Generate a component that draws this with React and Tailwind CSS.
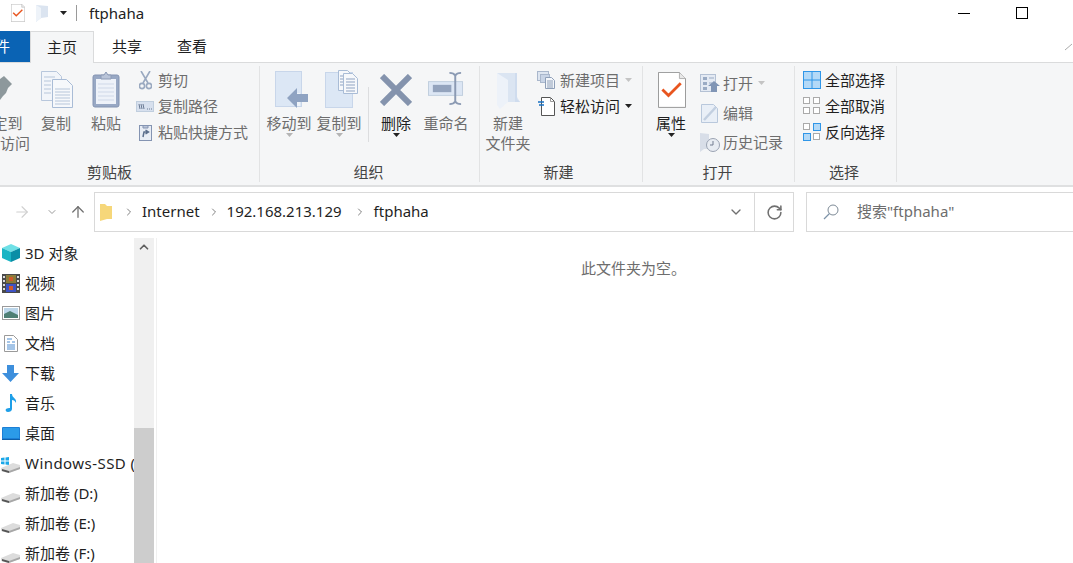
import { ArrowRight, ArrowUp, ChevronDown, ChevronRight, ChevronUp, RotateCw } from "lucide-react";

const Caret = ({ className = "" }) => (
    <svg width="7" height="4" viewBox="0 0 7 4" className={className}><path d="M0 0h7L3.5 4z" fill="currentColor" /></svg>
);

// ribbon icons
const PropsIcon = ({ size = 28 }) => (
    <svg width={size} height={size * 1.28} viewBox="0 0 32 41">
        <path d="M.5.5h24l7 7v33H.5z" fill="#fff" stroke="#8a8a8a" />
        <path d="M24.5.5v7h7" fill="#e8e8e8" stroke="#a8a8a8" />
        <path d="M5 20l7 7 14-14" fill="none" stroke="#e8551f" strokeWidth="3.2" />
    </svg>
);
const PinIcon = () => (
    <svg width="13" height="24" viewBox="0 0 13 24"><path d="M0 3l4-3 8 8-4 4-2 5-3 3-3 4z" fill="#8d989c" /></svg>
);
const CopyIcon = () => (
    <svg width="32" height="37" viewBox="0 0 32 37">
        <path d="M.5.5h15l5 5v24H.5z" fill="#f2f5fa" stroke="#b8c7dc" />
        <path d="M11.5 8.500h14l6 6v22h-20z" fill="#f6f8fb" stroke="#a9bcd6" />
        <path d="M3 6h11M3 10h7M3 14h7M3 18h7M3 22h7M14 18h15M14 21h15M14 24h15M14 27h15M14 30h15M14 33h15" stroke="#b7c6da" />
    </svg>
);
const PasteIcon = () => (
    <svg width="28" height="38" viewBox="0 0 28 38">
        <rect x="1" y="5" width="26" height="32" rx="2" fill="#98a8c4" stroke="#8494b2" />
        <rect x="4" y="9" width="20" height="25" fill="#eef2f9" />
        <path d="M6 14h16M6 18h16M6 22h16M6 26h16M6 30h16" stroke="#cfd8e8" />
        <path d="M9 9V5h3l2-3 2 3h3v4z" fill="#b9c4d8" stroke="#8c9ab5" />
    </svg>
);
const CutIcon = () => (
    <svg width="13" height="19" viewBox="0 0 13 19" fill="none" stroke="#9aa9c0" strokeWidth="1.6">
        <path d="M2 0l7 12M11 0L4 12" />
        <circle cx="3" cy="15" r="2.600" />
        <circle cx="10" cy="15" r="2.600" />
    </svg>
);
const CopyPathIcon = () => (
    <svg width="18" height="11" viewBox="0 0 18 11">
        <rect x=".5" y=".5" width="17" height="10" fill="#d7e0ee" stroke="#c0cede" />
        <path d="M3 3l1 5M5 3l1 5M7 3l1 5" stroke="#6a7a94" />
        <path d="M11 8h1M13 8h1M15 8h1" stroke="#6a7a94" />
    </svg>
);
const ShortcutIcon = () => (
    <svg width="13" height="18" viewBox="0 0 13 18">
        <rect x=".5" y="2.500" width="12" height="15" fill="#e8edf5" stroke="#8494b2" />
        <path d="M4 2.500h5V5H4z" fill="#b9c4d8" stroke="#8494b2" />
        <path d="M4 14l1-5h4M6.500 7l3 2-3 2" fill="none" stroke="#5a6e8c" strokeWidth="1.500" />
    </svg>
);
const MoveIcon = () => (
    <svg width="33" height="38" viewBox="0 0 33 38">
        <rect x=".5" y=".5" width="26" height="35" fill="#dce7f5" stroke="#c8d6ea" />
        <path d="M22 22h3v13h-3z" fill="#eef3f9" />
        <path d="M12 27l10-10v6h11v8H22v6z" fill="#8fa3c2" />
    </svg>
);
const CopyToIcon = () => (
    <svg width="33" height="38" viewBox="0 0 33 38">
        <rect x=".5" y="2.500" width="27" height="35" fill="#dce7f5" stroke="#c8d6ea" />
        <path d="M13.500 .5h9l4 4v16h-13z" fill="#f6f8fb" stroke="#a9bcd6" />
        <path d="M18.500 3.500h9l5 5v15h-14z" fill="#f6f8fb" stroke="#a9bcd6" />
        <path d="M21 9h9M21 12h9M21 15h9M21 18h9M21 21h9M15 6h3M15 9h3M15 12h3M15 15h3" stroke="#8fa3c2" />
    </svg>
);
const DeleteIcon = () => (
    <svg width="32" height="32" viewBox="0 0 32 32"><path d="M2 2l28 28M30 2L2 30" stroke="#8493ad" strokeWidth="6" /></svg>
);
const RenameIcon = () => (
    <svg width="36" height="33" viewBox="0 0 37 36" preserveAspectRatio="none">
        <rect x=".5" y="10.500" width="35" height="15" fill="#dce6f4" stroke="#c0cede" />
        <rect x="5" y="14" width="19" height="8" fill="#93a3bd" />
        <path d="M22 1c3 0 5 1 6 3 1-2 3-3 6-3M28 4v28M22 35c3 0 5-1 6-3 1 2 3 3 6 3" fill="none" stroke="#8b9ab3" strokeWidth="2" />
    </svg>
);
const FolderIcon = () => (
    <svg width="24" height="37" viewBox="0 0 24 37">
        <path d="M1 1h20v24l3 5H9z" fill="#dbe5f2" />
        <path d="M1 1l11 7v22L4 37 1 33z" fill="#edf2f9" />
        <path d="M21 1v26l3 3h-5V1z" fill="#cfdcee" />
    </svg>
);
const NewItemIcon = () => (
    <svg width="18" height="18" viewBox="0 0 18 18">
        <rect x=".5" y=".5" width="11" height="9" fill="#dde5f0" stroke="#a9b7cc" />
        <rect x="3.500" y="3.500" width="9" height="8" fill="#c8d4e6" stroke="#a9b7cc" />
        <path d="M8.500 6.500h6l3 3v8h-9z" fill="#f3f6fa" stroke="#8e9fb8" />
        <path d="M10 10h6M10 12h6M10 14h6M10 16h6" stroke="#8e9fb8" />
    </svg>
);
const EasyIcon = () => (
    <svg width="17" height="19" viewBox="0 0 17 19">
        <path d="M3.500 .5h9l4 4v14h-13z" fill="#fff" stroke="#555" />
        <path d="M12.500 .5v4h4" fill="none" stroke="#999" />
        <path d="M0 5h6M1 8h5" stroke="#1872c4" strokeWidth="1.300" />
    </svg>
);
const OpenIcon = () => (
    <svg width="20" height="18" viewBox="0 0 20 18">
        <rect x=".5" y=".5" width="15" height="17" fill="#e4eaf3" stroke="#b4c1d4" />
        <path d="M3 3h4v3H3zM3 8h4v3H3zM3 13h4v3H3z" fill="#9aabc4" />
        <path d="M9 4h5M9 9h3" stroke="#9aabc4" />
        <path d="M14 7l6 5h-3v6h-6v-6H8z" fill="#8095b5" />
    </svg>
);
const EditIcon = () => (
    <svg width="18" height="19" viewBox="0 0 18 19">
        <path d="M.5 .5h12l4 4v14H.5z" fill="#e9eff7" stroke="#b9c8dc" />
        <path d="M3 16L15 3" stroke="#c2cfe0" strokeWidth="2.500" />
    </svg>
);
const HistoryIcon = () => (
    <svg width="20" height="19" viewBox="0 0 20 19">
        <path d="M0 0l9 1v15H4l-4 3z" fill="#d8dee8" />
        <circle cx="13" cy="12" r="6.500" fill="#e8ecf2" stroke="#9aa3b2" />
        <path d="M13 8v4h-3" fill="none" stroke="#727d90" />
    </svg>
);
const GridIcon = ({ on }) => (
    <svg width="18" height="18" viewBox="0 0 18 18">
        {[[0, 0], [10, 0], [0, 10], [10, 10]].map(([x, y], i) => (
            on[i]
                ? <rect key={i} x={x + 0.5} y={y + 0.5} width="7" height="7" fill="#b3d9f7" stroke="#2f96e8" />
                : <rect key={i} x={x + 0.5} y={y + 0.5} width="6" height="6" fill="#fff" stroke="#aaa" />
        ))}
    </svg>
);
const SelectAllIcon = () => (
    <svg width="18" height="18" viewBox="0 0 18 18">
        <rect x=".5" y=".5" width="17" height="17" fill="#b3d9f7" stroke="#2f96e8" />
        <path d="M9 0v18M0 9h18" stroke="#2f96e8" />
    </svg>
);

// sidebar icons
const CubeIcon = () => (
    <svg width="18" height="18" viewBox="0 0 18 18">
        <path d="M9 0l9 4-9 4-9-4z" fill="#6fe0e6" />
        <path d="M0 4l9 4v10l-9-4z" fill="#19b4c4" />
        <path d="M18 4l-9 4v10l9-4z" fill="#0a8ea6" />
    </svg>
);
const FilmIcon = () => (
    <svg width="18" height="19" viewBox="0 0 18 19">
        <rect width="18" height="19" fill="#4a4a4a" />
        <path d="M1 2h2v2H1zM1 6h2v2H1zM1 10h2v2H1zM1 14h2v2H1zM15 2h2v2h-2zM15 6h2v2h-2zM15 10h2v2h-2zM15 14h2v2h-2z" fill="#ddd" />
        <rect x="4" y="1" width="10" height="8" fill="#8a7b3a" />
        <rect x="4" y="10" width="10" height="8" fill="#3f53c4" />
        <path d="M7 3h4v4H7zM7 12h4v4H7z" fill="#d05a2a" />
    </svg>
);
const PictureIcon = () => (
    <svg width="18" height="14" viewBox="0 0 18 14">
        <rect x=".5" y=".5" width="17" height="13" fill="#fff" stroke="#9a9a9a" />
        <rect x="2" y="2" width="14" height="10" fill="#bcd6ea" />
        <path d="M2 8l6-3 8 4v3H2z" fill="#4e7f74" />
    </svg>
);
const DocIcon = () => (
    <svg width="14" height="17" viewBox="0 0 14 17">
        <path d="M.5 .5h9l4 4v12H.5z" fill="#fff" stroke="#9a9a9a" />
        <path d="M3 4h5M3 7h3M8 7h3M3 10h8M3 12h8M3 14h8" stroke="#4a8bd0" />
    </svg>
);
const DownloadIcon = () => (
    <svg width="17" height="17" viewBox="0 0 17 17"><path d="M5 0h7v8h5l-8.500 9L0 8h5z" fill="#3d8fdc" /></svg>
);
const NoteIcon = () => (
    <svg width="12" height="18" viewBox="0 0 12 18">
        <path d="M5 0h2c0 4 5 4 4 9-1-2-2-3-4-3v9c0 2-2 3-4 3S0 16 1 15s3-1 4-1z" fill="#1e9fe8" />
    </svg>
);
const DesktopIcon = () => (
    <svg width="18" height="13" viewBox="0 0 18 13">
        <rect width="18" height="13" rx="1" fill="#1c7fd6" />
        <path d="M1 1h16v10H1z" fill="#2b9be8" />
        <path d="M0 12h18v1H0z" fill="#0f5fa8" />
    </svg>
);
const DriveIcon = () => (
    <svg width="19" height="10" viewBox="0 0 19 10" className="mt-[10px]">
        <path d="M0 5l12-5 7 2v4L7 10 0 8z" fill="#dcdcdc" />
        <path d="M1 6l7 2v2L1 8z" fill="#555" />
        <path d="M8 8l11-4v2L8 10z" fill="#a8a8a8" />
    </svg>
);
const WinDriveIcon = () => (
    <svg width="19" height="16" viewBox="0 0 19 16" className="mt-[3px]">
        <path d="M0 1l3.500-.5V3.500H0zM4.500 .4L8 0v3.500H4.500zM0 4.500h3.500v3L0 7zM4.500 4.500H8V8l-3.500-.5z" fill="#1aa7e8" />
        <path d="M0 11l12-5 7 2v4l-12 4-7-2z" fill="#dcdcdc" />
        <path d="M1 12l7 2v2l-7-2z" fill="#555" />
        <path d="M8 14l11-4v2L8 16z" fill="#a8a8a8" />
    </svg>
);

const BigButton = ({ width, icon, children, caret, dim = true, iconClass = "" }) => (
    <div className={`${width} shrink-0 flex flex-col items-center`}>
        <div className={`h-[43px] flex items-end justify-center ${iconClass}`}>{icon}</div>
        <div className={`mt-[1px] text-center leading-[20px] whitespace-nowrap ${dim ? "text-[#6d6d6d]" : "text-[#1f1f1f]"}`}>{children}</div>
        {caret && <Caret className={dim ? "text-[#b5b5b5]" : "text-[#222]"} />}
    </div>
);

const SmallButton = ({ icon, label, iconWidth, gap, height, dim = true, caret, caretDim = true }) => (
    <div className={`${height} flex items-center`}>
        <div className={`${iconWidth} ${gap} flex justify-center shrink-0`}>{icon}</div>
        <span className={`whitespace-nowrap ${dim ? "text-[#6d6d6d]" : "text-[#1f1f1f]"}`}>{label}</span>
        {caret && <Caret className={`ml-[5px] ${caretDim ? "text-[#c4c4c4]" : "text-[#222]"}`} />}
    </div>
);

const Group = ({ width, label, children }) => (
    <div className={`${width} shrink-0 my-[3px] border-r border-[#e2e3e4] flex flex-col`}>
        <div className="h-[97px] flex overflow-hidden">{children}</div>
        <div className="h-[20px] text-center leading-[20px] text-[#444]">{label}</div>
    </div>
);

const navItems = [
    { icon: <CubeIcon />, label: "3D 对象" },
    { icon: <FilmIcon />, label: "视频" },
    { icon: <PictureIcon />, label: "图片" },
    { icon: <DocIcon />, label: "文档" },
    { icon: <DownloadIcon />, label: "下载" },
    { icon: <NoteIcon />, label: "音乐" },
    { icon: <DesktopIcon />, label: "桌面" },
    { icon: <WinDriveIcon />, label: "Windows-SSD (C:)", labelClass: "tracking-[0.45px]" },
    { icon: <DriveIcon />, label: "新加卷 (D:)" },
    { icon: <DriveIcon />, label: "新加卷 (E:)" },
    { icon: <DriveIcon />, label: "新加卷 (F:)" },
];

export default function App() {
    return (
        <div className="w-[1073px] h-[563px] overflow-hidden bg-white flex flex-col text-[15px] font-['Noto_Sans','Noto_Sans_CJK_SC',sans-serif] text-[#1f1f1f]">
            {/* title bar */}
            <div className="h-[31px] shrink-0 flex items-center pb-[5px]">
                <div className="ml-[10px] w-[15px] flex justify-center"><PropsIcon size={14} /></div>
                <div className="ml-[11px]">
                    <svg width="13" height="17" viewBox="0 0 13 17"><path d="M0 0l12 1v11l-7 1-5 4z" fill="#dbe4f0" /><path d="M0 0l5 3v10l-5 4z" fill="#eef3f9" /></svg>
                </div>
                <Caret className="ml-[11px] text-[#222]" />
                <div className="ml-[9px] w-px h-[16px] bg-[#9a9a9a]" />
                <div className="ml-[12px] text-[#222]">ftphaha</div>
                <div className="ml-auto mr-[46px] w-[12px] h-px bg-black" />
                <div className="mr-[45px] w-[12px] h-[12px] border border-black" />
            </div>

            {/* tabs */}
            <div className="h-[32px] shrink-0 flex border-b border-[#dadbdc] relative">
                <div className="-ml-[40px] w-[70px] h-[31px] bg-[#0a63b4] text-white text-center leading-[30px]">文件</div>
                <div className="w-[64px] h-[32px] bg-[#f5f6f7] border border-b-0 border-[#dadbdc] text-center leading-[30px]">主页</div>
                <div className="w-[66px] text-center leading-[30px]">共享</div>
                <div className="w-[64px] text-center leading-[30px]">查看</div>
                <svg width="8" height="8" viewBox="0 0 8 8" className="absolute right-0 top-[12px]"><path d="M0 7l7-6" stroke="#aaa" fill="none" /></svg>
            </div>

            {/* ribbon */}
            <div className="h-[124px] shrink-0 bg-[#f5f6f7] border-b-2 border-[#dfe0e1] flex overflow-hidden">
                <Group width="w-[260px]" label={<span className="mr-[40px] inline-block">剪贴板</span>}>
                    <div className="-ml-[30px] flex pt-[3px]">
                        <BigButton width="w-[60px]" icon={<PinIcon />} iconClass="ml-[13px] pb-[12px]">固定到<br />快速访问</BigButton>
                        <BigButton width="w-[52px]" icon={<CopyIcon />} iconClass="ml-[2px] pb-[4px]">复制</BigButton>
                        <BigButton width="w-[48px]" icon={<PasteIcon />} iconClass="pb-[4px]">粘贴</BigButton>
                        <div className="ml-[6px] -mt-[3px] flex flex-col pt-[1px]">
                            <SmallButton height="h-[26px]" iconWidth="w-[18px]" gap="mr-[4px]" icon={<CutIcon />} label="剪切" />
                            <SmallButton height="h-[26px]" iconWidth="w-[18px]" gap="mr-[4px]" icon={<CopyPathIcon />} label="复制路径" />
                            <SmallButton height="h-[26px]" iconWidth="w-[18px]" gap="mr-[4px]" icon={<ShortcutIcon />} label="粘贴快捷方式" />
                        </div>
                    </div>
                </Group>

                <Group width="w-[220px]" label={<span className="mr-[2px] inline-block">组织</span>}>
                    <div className="flex pt-[3px]">
                        <BigButton width="w-[50px] ml-[4px]" icon={<MoveIcon />} iconClass="ml-[5px] pb-[3px]" caret>移动到</BigButton>
                        <BigButton width="w-[50px]" icon={<CopyToIcon />} iconClass="ml-[5px] pb-[4px]" caret>复制到</BigButton>
                        <div className="w-px h-[55px] mt-[18px] ml-[4px] bg-[#dcdddf]" />
                        <BigButton width="w-[52px] ml-[1px]" icon={<DeleteIcon />} caret dim={false} iconClass="pb-[6px]">删除</BigButton>
                        <BigButton width="w-[48px]" icon={<RenameIcon />} iconClass="pb-[7px]">重命名</BigButton>
                    </div>
                </Group>

                <Group width="w-[163px]" label={<span className="mr-[5px] inline-block">新建</span>}>
                    <div className="flex pt-[3px]">
                        <BigButton width="w-[56px]" icon={<FolderIcon />} iconClass="pb-[3px]">新建<br />文件夹</BigButton>
                        <div className="ml-[1px] -mt-[3px] flex flex-col pt-[1px]">
                            <SmallButton height="h-[26px]" iconWidth="w-[18px]" gap="mr-[5px]" icon={<NewItemIcon />} label="新建项目" caret />
                            <SmallButton height="h-[26px]" iconWidth="w-[18px]" gap="mr-[5px]" icon={<EasyIcon />} label="轻松访问" dim={false} caret caretDim={false} />
                        </div>
                    </div>
                </Group>

                <Group width="w-[152px]" label={<span className="mr-[2px] inline-block">打开</span>}>
                    <div className="flex pt-[3px]">
                        <BigButton width="w-[56px]" icon={<PropsIcon />} caret dim={false} iconClass="ml-[1px] pb-[4px]">属性</BigButton>
                        <div className="ml-[1px] -mt-[1px] flex flex-col">
                            <SmallButton height="h-[30px]" iconWidth="w-[20px]" gap="mr-[3px]" icon={<OpenIcon />} label="打开" caret />
                            <SmallButton height="h-[30px]" iconWidth="w-[20px]" gap="mr-[3px]" icon={<EditIcon />} label="编辑" />
                            <SmallButton height="h-[29px]" iconWidth="w-[20px]" gap="mr-[3px]" icon={<HistoryIcon />} label="历史记录" />
                        </div>
                    </div>
                </Group>

                <Group width="w-[102px]" label={<span className="mr-[3px] inline-block">选择</span>}>
                    <div className="flex flex-col pl-[8px] pt-[1px]">
                        <SmallButton height="h-[26px]" iconWidth="w-[18px]" gap="mr-[4px]" icon={<SelectAllIcon />} label="全部选择" dim={false} />
                        <SmallButton height="h-[26px]" iconWidth="w-[18px]" gap="mr-[4px]" icon={<GridIcon on={[0, 0, 0, 0]} />} label="全部取消" dim={false} />
                        <SmallButton height="h-[26px]" iconWidth="w-[18px]" gap="mr-[4px]" icon={<GridIcon on={[0, 1, 1, 0]} />} label="反向选择" dim={false} />
                    </div>
                </Group>
            </div>

            {/* address row */}
            <div className="h-[51px] shrink-0 flex items-start pt-[5px]">
                <ArrowRight size={18} strokeWidth={1.5} className="ml-[13px] mt-[11px] text-[#d0d0d0]" />
                <ChevronDown size={12} strokeWidth={2} className="ml-[15px] mt-[14px] text-[#9a9a9a]" />
                <ArrowUp size={18} strokeWidth={1.7} className="ml-[11px] mt-[11px] text-[#707070]" />
                <div className="ml-[7px] w-[700px] h-[40px] border border-[#d9d9d9] flex items-center">
                    <svg width="12" height="17" viewBox="0 0 12 17" className="ml-[5px]"><path d="M0 0h5l2 2h5v13l-5 0-7 2z" fill="#f6d77a" /></svg>
                    <ChevronRight size={12} strokeWidth={2} className="ml-[11px] text-[#808080]" />
                    <span className="ml-[7px] mb-[2px]">Internet</span>
                    <ChevronRight size={12} strokeWidth={2} className="ml-[8px] text-[#808080]" />
                    <span className="ml-[7px] mb-[2px]">192.168.213.129</span>
                    <ChevronRight size={12} strokeWidth={2} className="ml-[12px] text-[#808080]" />
                    <span className="ml-[8px] mb-[2px]">ftphaha</span>
                    <ChevronDown size={16} strokeWidth={2} className="ml-auto mr-[10px] text-[#707070]" />
                    <div className="w-[39px] h-full border-l border-[#d9d9d9] flex items-center justify-center">
                        <RotateCw size={17} strokeWidth={2.2} className="text-[#707070]" />
                    </div>
                </div>
                <div className="ml-[12px] flex-1 h-[40px] border border-r-0 border-[#d9d9d9] flex items-center text-[#6d6d6d]">
                    <svg width="16" height="16" viewBox="0 0 16 16" fill="none" className="ml-[16px]">
                        <circle cx="10" cy="6" r="5" stroke="#7d8a96" />
                        <path d="M6.500 9.500L1 15" stroke="#7d93a8" strokeWidth="1.200" />
                    </svg>
                    <span className="ml-[18px] mb-[2px]">搜索"ftphaha"</span>
                </div>
            </div>

            {/* body */}
            <div className="flex-1 flex min-h-0">
                <div className="w-[134px] shrink-0 overflow-hidden">
                    {navItems.map(item => (
                        <div key={item.label} className="h-[30px] flex items-center whitespace-nowrap">
                            <div className="w-[19px] ml-px mr-[5px] shrink-0 flex justify-center">{item.icon}</div>
                            <span className={item.labelClass}>{item.label}</span>
                        </div>
                    ))}
                </div>
                <div className="w-[20px] shrink-0 bg-[#f0f0f0] flex flex-col">
                    <div className="h-[190px] flex justify-center pt-[2px]">
                        <ChevronUp size={14} strokeWidth={3} className="text-[#606060]" />
                    </div>
                    <div className="flex-1 bg-[#cdcdcd]" />
                </div>
                <div className="flex-1 ml-[2px] border-l border-[#f0f0f0] pt-[19px] pl-[424px] text-[#6d6d6d]">此文件夹为空。</div>
            </div>
        </div>
    );
}
